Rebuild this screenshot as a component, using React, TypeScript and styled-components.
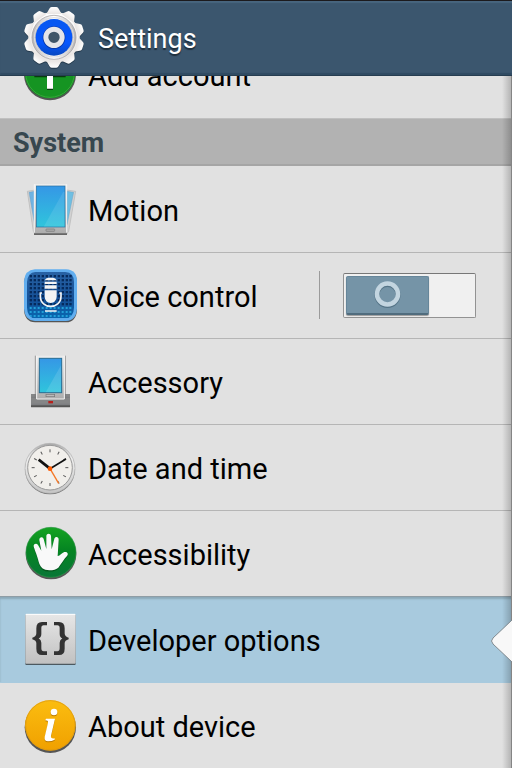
import React, { useState } from "react";
import styled, { createGlobalStyle, css } from "styled-components";

const GlobalStyle = createGlobalStyle`
  *, *::before, *::after { box-sizing: border-box; }
  body { margin: 0; background: #e1e1e1; font-family: Roboto, "Noto Sans", sans-serif; }
`;

const Screen = styled.div`
  display: flex;
  flex-direction: column;
  height: 100vh;
  overflow: hidden;
  background: #e1e1e1;
`;

const Header = styled.header`
  display: flex;
  align-items: center;
  flex: none;
  gap: 12px;
  height: 76px;
  padding: 0 22px 2px;
  background: #3b566e;
  border-top: 1px solid #1c1a1d;
  border-bottom: 1px solid #263d50;
  box-shadow: inset 0 2px 1px #48657e, inset 0 -2px 1px #304b62;
`;

const Title = styled.h1`
  margin: 0;
  padding-top: 4px;
  color: #fff;
  font-size: 27px;
  font-weight: 400;
  line-height: 32px;
  text-shadow: 0 2px 1px #1f2f3d;
`;

const Viewport = styled.main`
  position: relative;
  flex: 1;
  min-height: 0;
  overflow: hidden;
  &::after {
    content: "";
    position: absolute;
    inset: 0 0 0 auto;
    width: 10px;
    border-right: 1px solid #858585;
    background: linear-gradient(to right, rgba(0, 0, 0, 0), rgba(0, 0, 0, 0.2));
    pointer-events: none;
  }
`;

const ScrolledList = styled.div`
  margin-top: -44px;
`;

const SectionTitle = styled.h2`
  display: flex;
  align-items: center;
  height: 48px;
  margin: 0 0 1px;
  padding: 2px 13px 0;
  background: #b2b2b2;
  border-top: 1px solid #c0c0c0;
  border-bottom: 2px solid #a5a5a5;
  color: #37474f;
  font-size: 27px;
  font-weight: 700;
  line-height: 32px;
`;

const Row = styled.div<{ $selected?: boolean; $plain?: boolean }>`
  position: relative;
  display: flex;
  align-items: center;
  height: 86px;
  padding-right: 36px;
  border-bottom: 1px solid ${(p) => (p.$plain ? "transparent" : "#b5b5b5")};
  ${(p) =>
    p.$selected &&
    css`
      background: #a8cade;
      border-bottom-color: #a8cade;
      box-shadow: 0 -1px 0 #8f9da5, inset 0 2px 2px #8ba8b8;
    `}
`;

const RowLink = styled.a`
  display: flex;
  align-items: center;
  flex: 1;
  gap: 10px;
  height: 100%;
  padding-left: 22px;
  color: #000;
  text-decoration: none;
`;

const RowLabel = styled.span`
  font-size: 29px;
  line-height: 34px;
  padding-top: 3px;
`;

const Icon = styled.svg<{ $size?: number }>`
  display: block;
  flex: none;
  width: ${(p) => p.$size ?? 56}px;
  height: ${(p) => p.$size ?? 56}px;
  margin-bottom: 1px;
`;

const SwitchArea = styled.div`
  display: flex;
  align-items: center;
  height: 48px;
  margin-bottom: 1px;
  padding-left: 23px;
  border-left: 1px solid #9b9b9b;
`;

const Switch = styled.label`
  position: relative;
  display: flex;
  width: 133px;
  height: 45px;
  padding: 2px;
  background: #f0f0f0;
  border: 1px solid #929292;
  border-top-color: #777;
  border-radius: 2px;
`;

const SwitchInput = styled.input`
  position: absolute;
  inset: 0;
  width: 100%;
  height: 100%;
  margin: 0;
  opacity: 0;
  &:checked + span { margin-left: auto; }
`;

const Knob = styled.span`
  display: flex;
  align-items: center;
  justify-content: center;
  width: 83px;
  height: 39px;
  background: #7594a7;
  border: 1px solid #66869a;
  border-bottom: 2px solid #506c7d;
  border-radius: 2px;
  box-shadow: 0 1px 1px #999;
`;

const Notch = styled.svg`
  position: absolute;
  right: 0;
  top: 18px;
  z-index: 1;
  width: 24px;
  height: 52px;
`;

function GearIcon() {
  const teeth = Array.from({ length: 10 }, (_, i) => i * 36);
  return (
    <Icon $size={64} viewBox="66 15 192 192" aria-hidden="true">
      <defs>
        <linearGradient id="gear" x2="0" y2="1">
          <stop stopColor="#fff" /><stop offset="1" stopColor="#e9e5e3" />
        </linearGradient>
        <linearGradient id="gearRing" x2="1" y2="0">
          <stop stopColor="#b5b3b5" /><stop offset=".5" stopColor="#fff" /><stop offset="1" stopColor="#b5b3b5" />
        </linearGradient>
        <linearGradient id="gearBlue" x2="0" y2="1">
          <stop stopColor="#0757ef" /><stop offset=".65" stopColor="#0757ff" /><stop offset="1" stopColor="#0848c0" />
        </linearGradient>
        <g id="gearShape">
          <circle cx="162" cy="112" r="77" />
          {teeth.map((a) => (
            <path key={a} d="M139 42 L148 26 Q150 21 155 21 H169 Q174 21 176 26 L185 42Z" transform={`rotate(${a} 162 112)`} />
          ))}
        </g>
      </defs>
      <use href="#gearShape" y="3" fill="#24394b" />
      <use href="#gearShape" fill="url(#gear)" />
      <circle cx="162" cy="112" r="66" fill="url(#gearRing)" stroke="#9d9a9b" strokeWidth="2" />
      <circle cx="162" cy="112" r="59" fill="none" stroke="#dedcdd" strokeWidth="3" />
      <circle cx="162" cy="112" r="55" fill="url(#gearBlue)" />
      <circle cx="162" cy="113" r="25" fill="#3b566e" stroke="#0938a8" strokeWidth="18" />
      <circle cx="162" cy="112" r="24.5" fill="#405568" stroke="#e5e5e9" strokeWidth="15" />
    </Icon>
  );
}

function AddIcon() {
  return (
    <Icon viewBox="66 141 168 168" aria-hidden="true">
      <circle cx="150" cy="226" r="78" fill="#555" />
      <circle cx="150" cy="222" r="76" fill="#128d21" />
      <circle cx="150" cy="222" r="73" fill="#159422" stroke="#38a73b" strokeWidth="3" />
      <path d="M150 180V273M103 226H197" stroke="#073e0d" strokeWidth="18" />
      <path d="M150 178V269M103 218H197" stroke="#fff" strokeWidth="18" />
    </Icon>
  );
}

function PhoneGradients({ id }: { id: string }) {
  return (
    <defs>
      <linearGradient id={`${id}Screen`} x2="0" y2="1">
        <stop stopColor="#3597e6" /><stop offset="1" stopColor="#2fc5dc" />
      </linearGradient>
      <linearGradient id={`${id}Body`} x2="0" y2="1">
        <stop stopColor="#ededed" /><stop offset="1" stopColor="#adadad" />
      </linearGradient>
    </defs>
  );
}

function MotionIcon() {
  return (
    <Icon viewBox="36 33 168 168" aria-hidden="true">
      <PhoneGradients id="motion" />
      <path d="M52 64L75 60V192L70 184Z" fill="#d2d2d2" stroke="#b5b5b5" strokeWidth="2" />
      <path d="M57 67L74 64V164Z" fill="#6fb3e2" stroke="#5d93b8" />
      <path d="M197 64L170 60V192L176 184Z" fill="#d2d2d2" stroke="#b5b5b5" strokeWidth="2" />
      <path d="M191 67L171 64V164Z" fill="#6fbfe2" stroke="#5d93b8" />
      <rect x="72" y="45" width="99" height="150" fill="#666" />
      <path d="M72 42H171V190H72Z" fill="url(#motionBody)" />
      <path d="M73 43V188M170 43V188" stroke="#f5f5f5" strokeWidth="3" />
      <rect x="79" y="48" width="86" height="123" fill="url(#motionScreen)" stroke="#256d9e" strokeWidth="2" />
      <path d="M160 65L101 170H164V65Z" fill="#fff" opacity=".1" />
      <rect x="108" y="177" width="26" height="7" rx="2" fill="#aaa" stroke="#777" strokeWidth="2" />
    </Icon>
  );
}

function VoiceIcon() {
  const shape = "M75 43H168Q201 45 201 79V160Q199 197 168 198H75Q44 196 42 160V79Q44 45 75 43Z";
  const columns = [63, 75, 87, 99, 111, 123, 135, 147, 159, 171, 182];
  const darkRows = [60, 72, 84, 96, 108, 120, 132, 144];
  const lightRows = [156, 168, 180];
  return (
    <Icon viewBox="36 36 168 168" aria-hidden="true">
      <defs>
        <linearGradient id="voiceFill" x2="0" y2="1">
          <stop stopColor="#2862a4" /><stop offset=".6" stopColor="#155097" /><stop offset="1" stopColor="#0768b1" />
        </linearGradient>
        <clipPath id="voiceInner">
          <path d="M76 51H166Q192 53 192 81V158Q191 188 166 190H76Q52 188 51 158V81Q53 53 76 51Z" />
        </clipPath>
      </defs>
      <path d={shape} fill="#555" transform="translate(0 4)" />
      <path d={shape} fill="#62aeef" />
      <g clipPath="url(#voiceInner)">
        <rect x="50" y="50" width="143" height="141" fill="url(#voiceFill)" />
        {darkRows.map((y) => columns.map((x) => <rect key={`${x}-${y}`} x={x - 4} y={y} width="7" height="7" fill="#062a5c" />))}
        {lightRows.map((y) => columns.map((x) => <rect key={`${x}-${y}`} x={x - 4} y={y} width="6" height="6" fill="#22a0d9" />))}
      </g>
      <path d="M115 68H129Q137 69 140 76H104Q107 69 115 68ZM104 80H140V87H104ZM104 91H140V101H104ZM104 106H140V125Q139 143 122 144Q105 143 104 125Z" fill="#f4f4f4" />
      <path d="M96 114H91V124C91 164 153 164 153 124V114H148M105 168H140" fill="none" stroke="#f4f4f4" strokeWidth="5" />
    </Icon>
  );
}

function AccessoryIcon() {
  return (
    <Icon viewBox="36 24 168 168" aria-hidden="true">
      <PhoneGradients id="dock" />
      <rect x="63" y="150" width="117" height="37" rx="2" fill="#555" />
      <path d="M63 147H180V181H63Z" fill="#858687" />
      <path d="M64 157H179M64 178H179" stroke="#77797b" strokeWidth="2" />
      <path d="M78 32H165V162H78Z" fill="url(#dockBody)" />
      <path d="M76 32V160M166 32V160" stroke="#777" strokeWidth="2" />
      <path d="M80 32V162H163V32" fill="none" stroke="#f3f3f3" strokeWidth="3" />
      <rect x="88" y="40" width="67" height="103" fill="url(#dockScreen)" stroke="#276c92" strokeWidth="3" />
      <path d="M153 61L107 142H153Z" fill="#fff" opacity=".12" />
      <rect x="108" y="148" width="26" height="7" fill="#bbb" stroke="#777" strokeWidth="2" />
      <rect x="115" y="168" width="14" height="7" fill="#b8201b" />
    </Icon>
  );
}

function ClockIcon() {
  return (
    <Icon viewBox="36 27 168 168" aria-hidden="true">
      <defs>
        <linearGradient id="clockRim" x2="0" y2="1">
          <stop stopColor="#a7a7a7" /><stop offset=".3" stopColor="#eee" /><stop offset="1" stopColor="#c5c5c5" />
        </linearGradient>
      </defs>
      <circle cx="120" cy="118" r="75" fill="#707070" />
      <circle cx="120" cy="115" r="75" fill="url(#clockRim)" stroke="#b3b3b3" strokeWidth="2" />
      <circle cx="120" cy="113" r="67" fill="#f1efeb" stroke="#999" strokeWidth="3" />
      {Array.from({ length: 12 }, (_, i) => (
        <path key={i} d="M120 58V67" stroke="#555" strokeWidth="3" transform={`rotate(${i * 30} 120 113)`} />
      ))}
      <path d="M120 116L86 89" stroke="#111" strokeWidth="8" />
      <path d="M120 116L168 87" stroke="#111" strokeWidth="5" />
      <path d="M120 116L146 160" stroke="#f47827" strokeWidth="4" />
      <circle cx="120" cy="116" r="7" fill="#ff5a00" />
    </Icon>
  );
}

function HandIcon() {
  const hand = "M84 133C81 119 72 101 71 93C71 86 80 84 84 90L94 107L88 76C87 66 98 64 101 72L109 102L109 63C110 54 122 54 123 63L125 103L133 71C136 63 147 65 146 75L143 123C149 124 155 114 163 111C171 109 177 116 171 123C162 132 153 148 145 158C136 167 107 169 97 160C89 153 86 141 84 133Z";
  return (
    <Icon viewBox="36 30 168 168" aria-hidden="true">
      <defs>
        <linearGradient id="handGreen" x2="0" y2="1">
          <stop stopColor="#15a322" /><stop offset=".45" stopColor="#058522" /><stop offset="1" stopColor="#087637" />
        </linearGradient>
      </defs>
      <circle cx="123" cy="117" r="76" fill="#555" />
      <circle cx="123" cy="112" r="75" fill="url(#handGreen)" stroke="#2a9745" strokeWidth="2" />
      <path d={hand} transform="translate(0 4)" fill="#075a20" />
      <path d={hand} fill="#f9f9f9" />
    </Icon>
  );
}

function DeveloperIcon() {
  return (
    <Icon viewBox="36 63 168 168" aria-hidden="true">
      <defs>
        <linearGradient id="devTile" x2="0" y2="1">
          <stop stopColor="#e7e7e7" /><stop offset="1" stopColor="#c1c1c1" />
        </linearGradient>
      </defs>
      <rect x="46" y="74" width="151" height="151" rx="3" fill="#4c5960" />
      <rect x="46" y="72" width="151" height="149" rx="3" fill="url(#devTile)" />
      <path d="M48 73H195" stroke="#fff" strokeWidth="3" />
      <path d="M111 96V106H101Q94 106 94 114V132Q94 142 86 145Q94 150 94 158V175Q94 184 101 184H111V195H96Q79 195 79 176V160Q79 151 67 148V143Q79 140 79 130V115Q79 96 96 96Z" fill="#333" />
      <path d="M132 96V106H142Q149 106 149 114V132Q149 142 157 145Q149 150 149 158V175Q149 184 142 184H132V195H147Q164 195 164 176V160Q164 151 176 148V143Q164 140 164 130V115Q164 96 147 96Z" fill="#333" />
    </Icon>
  );
}

function InfoIcon() {
  const stem = "M108 86H135L123 137Q121 147 134 145V149Q126 154 114 154Q102 154 104 141L114 98Q115 91 106 91Z";
  return (
    <Icon viewBox="36 21 168 168" aria-hidden="true">
      <defs>
        <linearGradient id="infoGold" x2="0" y2="1">
          <stop stopColor="#fbbd10" /><stop offset="1" stopColor="#f0a000" />
        </linearGradient>
      </defs>
      <circle cx="121" cy="112" r="77" fill="#555" />
      <circle cx="121" cy="106" r="76" fill="url(#infoGold)" />
      <circle cx="121" cy="106" r="74" fill="none" stroke="#d89615" strokeWidth="2" />
      <g fill="#b87800" transform="translate(0 3)"><circle cx="132" cy="66" r="10" /><path d={stem} /></g>
      <g fill="#fff"><circle cx="132" cy="66" r="10" /><path d={stem} /></g>
    </Icon>
  );
}

function SettingRow({ icon, label, selected, plain, children }: {
  icon: React.ReactNode;
  label: string;
  selected?: boolean;
  plain?: boolean;
  children?: React.ReactNode;
}) {
  return (
    <Row $selected={selected} $plain={plain}>
      <RowLink href="#" aria-current={selected ? "page" : undefined}>
        {icon}
        <RowLabel>{label}</RowLabel>
      </RowLink>
      {children}
    </Row>
  );
}

export default function App() {
  const [voice, setVoice] = useState(false);
  return (
    <Screen>
      <GlobalStyle />
      <Header>
        <GearIcon />
        <Title>Settings</Title>
      </Header>
      <Viewport>
        <ScrolledList>
          <SettingRow icon={<AddIcon />} label="Add account" plain />
          <SectionTitle>System</SectionTitle>
          <SettingRow icon={<MotionIcon />} label="Motion" />
          <SettingRow icon={<VoiceIcon />} label="Voice control">
            <SwitchArea>
              <Switch>
                <SwitchInput type="checkbox" role="switch" aria-label="Voice control" checked={voice} onChange={(e) => setVoice(e.target.checked)} />
                <Knob>
                  <Icon $size={30} viewBox="0 0 30 30" aria-hidden="true">
                    <circle cx="14.5" cy="16" r="10.5" fill="none" stroke="#557487" strokeWidth="5" />
                    <circle cx="14.5" cy="15" r="10.5" fill="none" stroke="#c3d5e0" strokeWidth="4.5" />
                  </Icon>
                </Knob>
              </Switch>
            </SwitchArea>
          </SettingRow>
          <SettingRow icon={<AccessoryIcon />} label="Accessory" />
          <SettingRow icon={<ClockIcon />} label="Date and time" />
          <SettingRow icon={<HandIcon />} label="Accessibility" />
          <SettingRow icon={<DeveloperIcon />} label="Developer options" selected>
            <Notch viewBox="0 0 24 52" aria-hidden="true">
              <path d="M24 5L5 23Q2 26 5 29L24 47Z" fill="#f8f8f8" />
              <path d="M24 5L5 23Q2 26 5 29L24 47" fill="none" stroke="#808a90" />
            </Notch>
          </SettingRow>
          <SettingRow icon={<InfoIcon />} label="About device" />
        </ScrolledList>
      </Viewport>
    </Screen>
  );
}
